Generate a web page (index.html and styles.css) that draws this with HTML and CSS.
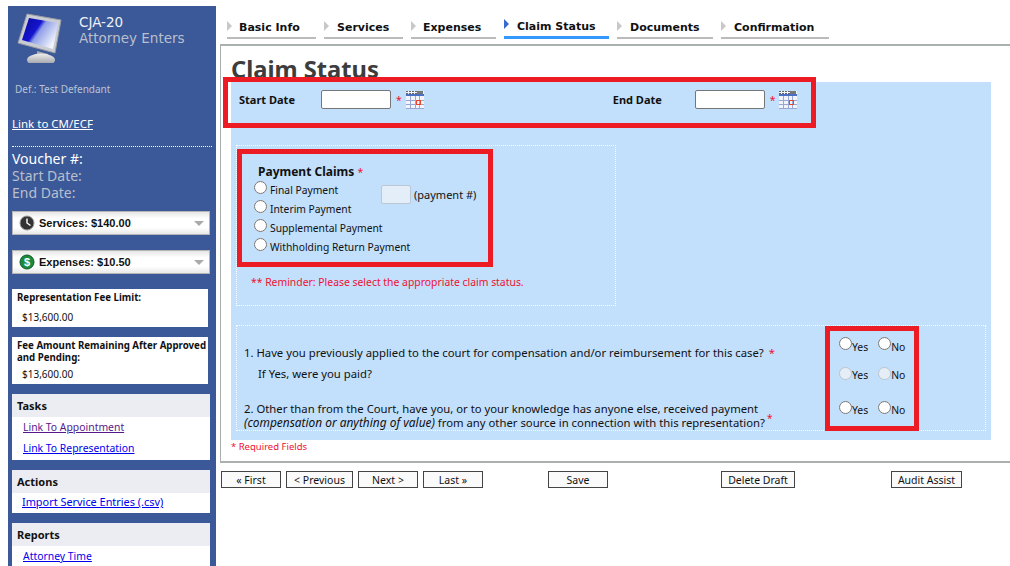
FILE: index.html
```html
<!DOCTYPE html>
<html lang="en">
<head>
<meta charset="utf-8">
<title>Claim Status</title>
<link rel="stylesheet" href="styles.css">
</head>
<body>
<div class="page">
  <aside class="sidebar">
    <div class="brand">
      <svg class="monitor" width="46" height="50" viewBox="0 0 46 50">
        <defs>
          <linearGradient id="scr" x1="0" y1="0" x2="1" y2="0.6">
            <stop offset="0" stop-color="#0a0a9a"/><stop offset=".45" stop-color="#1414d0"/><stop offset=".55" stop-color="#8f9fe8"/><stop offset="1" stop-color="#f2f4fb"/>
          </linearGradient>
          <linearGradient id="bs" x1="0" y1="0" x2="0" y2="1"><stop offset="0" stop-color="#eee"/><stop offset="1" stop-color="#8e9098"/></linearGradient>
        </defs>
        <path d="M10 1 L44 7 L38 40 L1 30 Z" fill="#c9ccd2" stroke="#9a9ca4" stroke-width="1"/>
        <path d="M12 5 L41 10 L36 36 L5 27 Z" fill="url(#scr)"/>
        <path d="M20 38 L31 41 L32 44 L20 42 Z" fill="#a9abb0"/>
        <ellipse cx="24" cy="47" rx="14" ry="6.5" fill="url(#bs)"/>
      </svg>
      <div class="brand-text"><div class="brand-title">CJA-20</div><div class="brand-sub">Attorney Enters</div></div>
    </div>
    <div class="def">Def.: Test Defendant</div>
    <a class="ecf" href="#">Link to CM/ECF</a>
    <div class="voucher">
      <div class="v-main">Voucher #:</div>
      <div>Start Date:</div>
      <div>End Date:</div>
    </div>
    <div class="amount first">
      <svg width="16" height="16" viewBox="0 0 16 16"><circle cx="8" cy="8" r="7" fill="#333" stroke="#999"/><path d="M8 3.5V8L11.5 10.5" stroke="#fff" stroke-width="1.4" fill="none"/></svg>
      <span>Services: $140.00</span><i class="caret"></i>
    </div>
    <div class="amount">
      <svg width="16" height="16" viewBox="0 0 16 16"><circle cx="8" cy="8" r="7" fill="#1c8a3c" stroke="#0d5c26"/><text x="8" y="11.5" class="dollar" text-anchor="middle">$</text></svg>
      <span>Expenses: $10.50</span><i class="caret"></i>
    </div>
    <div class="fee fee-one"><b>Representation Fee Limit:</b><p>$13,600.00</p></div>
    <div class="fee"><b>Fee Amount Remaining After Approved and Pending:</b><p class="tight">$13,600.00</p></div>
    <section class="panel tasks"><h3>Tasks</h3><a class="visited" href="#">Link To Appointment</a><a href="#">Link To Representation</a></section>
    <section class="panel actions"><h3>Actions</h3><a href="#">Import Service Entries (.csv)</a></section>
    <section class="panel reports"><h3>Reports</h3><a href="#">Attorney Time</a></section>
  </aside>

  <main class="main">
    <nav class="tabs">
      <a class="tab w1">Basic Info</a>
      <a class="tab w2">Services</a>
      <a class="tab w3">Expenses</a>
      <a class="tab w4 active">Claim Status</a>
      <a class="tab w5">Documents</a>
      <a class="tab w6">Confirmation</a>
    </nav>
    <div class="content">
      <h1>Claim Status</h1>
      <div class="form">
        <div class="dates">
          <label class="d-label">Start Date</label><input class="date" type="text"><span class="req">*</span>
          <svg class="cal" width="20" height="20" viewBox="0 0 20 20"><use href="#calicon"/></svg>
          <label class="d-label end">End Date</label><input class="date" type="text"><span class="req">*</span>
          <svg class="cal" width="20" height="20" viewBox="0 0 20 20">
            <g id="calicon">
              <rect x="1" y="1" width="18" height="18" fill="#f2f4fc"/>
              <path d="M1 1.500H19M1 3.500H19" stroke="#666" stroke-dasharray="2 1" fill="none"/>
              <rect x="12" y="1" width="6" height="3" fill="#777"/>
              <rect x="1" y="4" width="18" height="2" fill="#4a70c4"/>
              <path d="M1 10.500H19M1 14.500H19M1 18.500H19M5.500 6V19M10.500 6V19M14.500 6V19" stroke="#98a6d6" fill="none"/>
              <rect x="11.500" y="10.500" width="4" height="4" fill="none" stroke="#e8452c"/>
            </g>
          </svg>
        </div>
        <fieldset class="claims">
          <div class="claims-title">Payment Claims <span class="req">*</span></div>
          <div class="claims-body">
            <div class="opts">
              <label class="opt"><input type="radio" name="p">Final Payment</label>
              <label class="opt"><input type="radio" name="p">Interim Payment</label>
              <label class="opt"><input type="radio" name="p">Supplemental Payment</label>
              <label class="opt"><input type="radio" name="p">Withholding Return Payment</label>
            </div>
            <div class="pnum"><input class="num" type="text" disabled><span>(payment #)</span></div>
          </div>
          <p class="reminder">** Reminder: Please select the appropriate claim status.</p>
        </fieldset>
        <div class="questions">
          <div class="q q1">
            <div class="q-text">1. Have you previously applied to the court for compensation and/or reimbursement for this case? <span class="req">*</span></div>
            <div class="yn"><label><input type="radio" name="a">Yes</label><label><input type="radio" name="a">No</label></div>
          </div>
          <div class="q q2">
            <div class="q-text indent">If Yes, were you paid?</div>
            <div class="yn"><label><input type="radio" name="b" disabled>Yes</label><label><input type="radio" name="b" disabled>No</label></div>
          </div>
          <div class="q q3">
            <div class="q-text">2. Other than from the Court, have you, or to your knowledge has anyone else, received payment<br><em>(compensation or anything of value)</em> from any other source in connection with this representation?<sup class="req">*</sup></div>
            <div class="yn"><label><input type="radio" name="c">Yes</label><label><input type="radio" name="c">No</label></div>
          </div>
        </div>
      </div>
      <div class="required">* Required Fields</div>
    </div>
    <div class="buttons">
      <button class="b60">« First</button><button class="b67">&lt; Previous</button><button class="b60 g">Next &gt;</button><button class="b60 g">Last »</button>
      <button class="b60 save">Save</button>
      <button class="del">Delete Draft</button>
      <button class="audit">Audit Assist</button>
    </div>
    <div class="mark m1"></div>
    <div class="mark m2"></div>
    <div class="mark m3"></div>
  </main>
</div>
</body>
</html>
```
FILE: styles.css
```css
* { box-sizing: border-box; }
html, body { margin: 0; height: 566px; overflow: hidden; background: #fff; }
body { font-family: "Noto Sans", "DejaVu Sans", sans-serif; font-size: 10.4px; color: #111; }
.page { display: flex; height: 566px; overflow: hidden; }

.sidebar { width: 208px; margin: 6px 0 0 8px; padding: 0 4px; background: #3b5998; color: #b9bfcc; flex: none; overflow: hidden; }
.brand { display: flex; height: 54px; }
.monitor { margin: 7px 0 0 5px; flex: none; }
.brand-text { margin: 8px 0 0 16px; font-family: "DejaVu Sans", sans-serif; font-size: 13.5px; line-height: 16px; }
.brand-title { color: #eef1f7; }
.def { margin: 23px 0 0 3px; font-size: 10px; line-height: 13px; color: #b9c3d6; }
.ecf { display: block; margin-top: 20px; font-size: 11.5px; line-height: 16px; color: #fff; text-decoration: underline; }
.voucher { margin-top: 14px; border-top: 1px dotted #fff; padding-top: 3px; font-size: 14px; line-height: 17px; width: 200px; }
.v-main { color: #fff; }
.amount { display: flex; align-items: center; width: 198px; height: 24px; padding: 0 5px 0 6px; background: linear-gradient(#e6e6e6, #fff 30%, #fff 70%, #e8e8e8); border: 1px solid #b5b5b5; color: #111; font-family: "Liberation Sans", sans-serif; font-weight: 700; font-size: 11px; margin-top: 15px; position: relative; }
.amount.first { margin-top: 10px; }
.amount span { margin-left: 4px; flex: 1; }
.dollar { font-size: 11px; font-weight: 700; fill: #fff; }
.caret { width: 0; height: 0; border: 5px solid transparent; border-top: 5px solid #aaa; border-bottom: 0; }
.fee { width: 196px; background: #fff; color: #111; padding: 3px 1px 3px 5px; margin-top: 10px; }
.fee-one { margin-top: 15px; height: 38px; }
.fee b { display: block; font-size: 9.7px; line-height: 12px; }
.fee p { margin: 7px 0 0 5px; font-size: 10px; line-height: 13px; }
.fee p.tight { margin-top: 4px; }
.panel { width: 198px; background: #fff; margin-top: 10px; }
.panel h3 { margin: 0; height: 23px; padding: 0 5px; background: #ecedf3; color: #111; font-size: 11px; line-height: 23px; font-weight: 700; }
.panel a { display: block; color: #0000ee; text-decoration: underline; font-size: 10.4px; }
.tasks { height: 66px; }
.tasks a { margin-left: 11px; line-height: 21px; }
.tasks a.visited { color: #551a8b; }
.actions { height: 43px; }
.actions a { margin-left: 10px; line-height: 18px; font-size: 10.9px; }
.reports a { margin-left: 11px; line-height: 20px; }

.main { flex: 1; position: relative; margin-left: 4px; min-width: 0; }
.tabs { display: flex; gap: 8px; height: 44px; padding: 20px 0 0 7px; }
.tab { height: 19px; padding-left: 13px; font-family: "DejaVu Sans", sans-serif; font-weight: 700; font-size: 11px; line-height: 16px; color: #111; border-bottom: 2px solid #bbb; position: relative; white-space: nowrap; }
.tab::before { content: ""; position: absolute; left: 0; top: 1px; border: 5.5px solid transparent; border-left: 5px solid #c8c8c8; border-right: 0; }
.tab.active { border-bottom: 3px solid #3399ff; top: -1px; height: 20px; }
.tab.active::before { border-left-color: #3a68d0; top: 0; }
.w1 { width: 89px; padding-left: 12px; } .w2 { width: 79px; } .w3 { width: 85px; padding-left: 12px; } .w4 { width: 105px; } .w5 { width: 96px; } .w6 { width: 108px; }
.content { height: 419px; border-top: 2px solid #a9b0ae; border-left: 1px solid #a9b0ae; border-bottom: 2px solid #a9b0ae; padding-left: 10px; }
h1 { margin: 0; height: 36px; padding-top: 10px; font-family: "Noto Sans", sans-serif; font-size: 23.7px; line-height: 26px; color: #3d3d3d; font-weight: 700; white-space: nowrap; }
.form { width: 760px; height: 358px; background: #c2dffc; padding: 5px 5px 0; }
.dates { display: flex; align-items: center; height: 25px; padding-left: 3px; }
.d-label { width: 82px; font-weight: 700; font-size: 11px; }
.d-label.end { width: 82px; margin-left: 188px; }
.date { width: 70px; height: 19px; border: 1px solid #767676; background: #fff; border-radius: 2px; }
.req { color: #f01030; margin-left: 5px; }
.cal { margin-left: 3px; }
.claims { margin: 33px 0 0 0; width: 380px; height: 161px; padding: 0 0 0 17px; border: 1px dotted #fff; }
.claims-title { margin: 18px 0 0 4px; font-size: 12px; font-weight: 700; line-height: 16px; }
.claims-title .req { font-weight: 400; font-size: 10.5px; margin-left: 0; }
.claims-body { display: flex; }
.opts { width: 127px; font-size: 10.3px; }
.opt { display: flex; align-items: center; height: 19px; white-space: nowrap; }
.opt input, .yn input { margin: 0; width: 13px; height: 13px; flex: none; }
.opt input { margin-right: 3px; position: relative; top: -2px; }
.pnum { display: flex; align-items: center; gap: 3px; margin: 4px 0 0 0; height: 20px; font-size: 11px; }
.num { width: 30px; height: 19px; border: 1px solid #bbc7d4; background: #e4eef8; border-radius: 2px; }
.reminder { margin: 19px 0 0 -3px; color: #f01030; }
.questions { margin-top: 19px; width: 750px; height: 106px; border: 1px dotted #fff; padding-left: 7px; }
.q { position: relative; display: flex; justify-content: space-between; }
.q1 { height: 33px; padding-top: 20px; }
.q2 { height: 34px; padding-top: 8px; }
.q3 { padding-top: 9px; line-height: 14px; }
.q-text { width: 590px; font-size: 11.3px; line-height: 14px; white-space: nowrap; }
.q-text em { font-size: 11.9px; line-height: 1; }
.indent { padding-left: 14px; }
.q-text .req { margin-left: 2px; }
sup.req { margin-left: 2px; font-size: 10px; line-height: 0; }
.yn { display: flex; position: absolute; left: 595px; top: 12px; gap: 10px; }
.q2 .yn { top: 7px; }
.q3 .yn { top: 8px; }
.yn label { display: flex; align-items: flex-end; height: 15px; line-height: 12px; }
.yn input { margin-bottom: 2px; }
.q1 .yn input { margin-bottom: 3px; }
.q2 .yn input { margin-bottom: 1px; }
.required { color: #f01030; font-size: 9.5px; line-height: 13px; margin-top: 0; }
.buttons { display: flex; padding: 8px 0 0 1px; }
button { height: 17px; padding: 0; border: 1px solid #444; background: #fafafa; font: 10.5px "Noto Sans", sans-serif; color: #111; margin: 0; }
.b60 { width: 60px; }
.b67 { width: 67px; margin-left: 5px; }
.g { margin-left: 5px; }
.save { margin-left: 65px; }
.del { width: 74px; margin-left: 113px; }
.audit { width: 71px; margin-left: 96px; }
.mark { position: absolute; border: 5px solid #ed1c24; pointer-events: none; }
.m1 { left: 3px; top: 77px; width: 593px; height: 51px; }
.m2 { left: 17px; top: 149px; width: 256px; height: 118px; }
.m3 { left: 605px; top: 326px; width: 94px; height: 105px; }
```
